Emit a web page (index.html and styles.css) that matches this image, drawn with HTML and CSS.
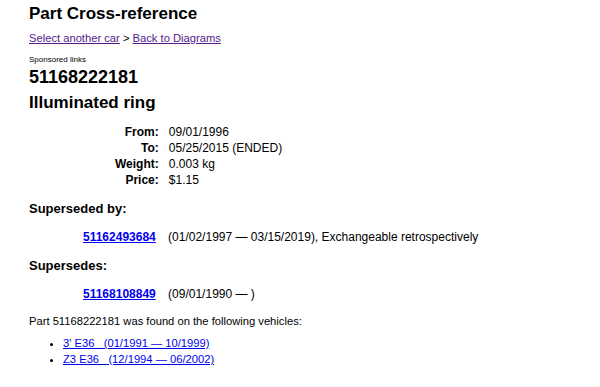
FILE: index.html
```html
<!DOCTYPE html>
<html lang="en">
<head>
  <meta charset="UTF-8">
  <title>Part Cross-reference</title>
  <link rel="stylesheet" href="styles.css">
</head>
<body>
  <div class="page">
    <h1>Part Cross-reference</h1>

    <div class="crumbs">
      <a href="#" class="visited">Select another car</a> &gt; <a href="#" class="visited">Back to Diagrams</a>
    </div>

    <div class="sponsored">Sponsored links</div>

    <h2 class="part-no">51168222181</h2>
    <h2 class="part-name">Illuminated ring</h2>

    <table class="details">
      <tr><th>From:</th><td>09/01/1996</td></tr>
      <tr><th>To:</th><td>05/25/2015 (ENDED)</td></tr>
      <tr><th>Weight:</th><td>0.003 kg</td></tr>
      <tr><th>Price:</th><td>$1.15</td></tr>
    </table>

    <h3>Superseded by:</h3>
    <div class="ref">
      <a href="#" class="part-link">51162493684</a>
      <span>(01/02/1997 — 03/15/2019), Exchangeable retrospectively</span>
    </div>

    <h3>Supersedes:</h3>
    <div class="ref">
      <a href="#" class="part-link">51168108849</a>
      <span>(09/01/1990 — )</span>
    </div>

    <p class="found">Part 51168222181 was found on the following vehicles:</p>
    <ul class="vehicles">
      <li><a href="#">3' E36&nbsp;&nbsp; (01/1991 — 10/1999)</a></li>
      <li><a href="#">Z3 E36&nbsp;&nbsp; (12/1994 — 06/2002)</a></li>
    </ul>
  </div>
</body>
</html>
```

FILE: styles.css
```css
* {
  margin: 0;
  padding: 0;
  box-sizing: border-box;
}

body {
  font-family: "Liberation Sans", Arial, sans-serif;
  font-size: 12px;
  color: #000;
  background: #fff;
}

.page {
  padding: 3px 29px 0;
}

a {
  color: #0000ee;
}

a.visited {
  color: #551a8b;
}

h1 {
  font-size: 17px;
  line-height: 22px;
  margin-bottom: 5px;
}

.crumbs {
  font-size: 11.2px;
  line-height: 16px;
  margin-bottom: 9px;
}

.sponsored {
  font-size: 8px;
  line-height: 10px;
}

h2 {
  font-size: 18px;
  line-height: 24px;
}

.part-no {
  margin-bottom: 2px;
}

.part-name {
  font-size: 17px;
}

.details {
  border-collapse: collapse;
  margin: 9px 0 0 86px;
}

.details th {
  text-align: right;
  font-weight: bold;
  padding: 0 10px 0 0;
  line-height: 16px;
}

.details td {
  line-height: 16px;
}

h3 {
  font-size: 13px;
  line-height: 16px;
  margin-top: 13px;
}

.ref {
  line-height: 16px;
  margin-top: 12px;
  padding-left: 54px;
}

.part-link {
  font-weight: bold;
  margin-right: 9px;
}

.found {
  font-size: 11.2px;
  line-height: 16px;
  margin-top: 11px;
}

.vehicles {
  font-size: 11.2px;
  list-style: disc;
  margin: 6px 0 0 34px;
}

.vehicles li {
  line-height: 16px;
}
```
